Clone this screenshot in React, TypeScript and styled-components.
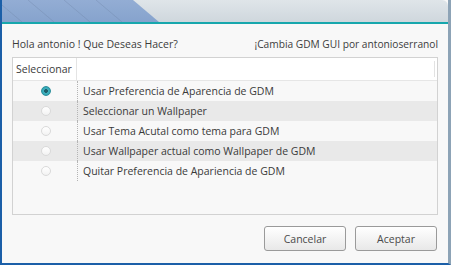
import React from "react";
import styled, { createGlobalStyle } from "styled-components";

const GlobalStyle = createGlobalStyle`
  html, body {
    margin: 0;
    padding: 0;
    background: #1b5fa8;
  }
  body {
    font-family: "Open Sans", "DejaVu Sans", sans-serif;
  }
`;

const options = [
  "Usar Preferencia de Aparencia de GDM",
  "Seleccionar un Wallpaper",
  "Usar Tema Acutal como tema para GDM",
  "Usar Wallpaper actual como Wallpaper de GDM",
  "Quitar Preferencia de Apariencia de GDM",
];

// blue slanted band at the left of the title bar
const TitleArt = () => (
  <StripeSvg width="160" height="22" viewBox="0 0 160 22">
    <defs>
      <linearGradient id="band" x1="0" y1="0" x2="0" y2="1">
        <stop offset="0" stopColor="#93add4" />
        <stop offset="1" stopColor="#86a3cd" />
      </linearGradient>
    </defs>
    <polygon points="0,0 131,0 157,22 0,22" fill="url(#band)" />
    <g stroke="#6f86a8" strokeOpacity="0.45" strokeWidth="0.8">
      <line x1="-6" y1="0" x2="20" y2="22" />
      <line x1="26" y1="0" x2="52" y2="22" />
      <line x1="62" y1="0" x2="88" y2="22" />
      <line x1="94" y1="0" x2="120" y2="22" />
    </g>
  </StripeSvg>
);

const App = () => {
  const selected = 0;
  return (
    <>
      <GlobalStyle />
      <Window>
        <TitleBar>
          <TitleArt />
        </TitleBar>
        <Body>
          <TopRow>
            <Greeting>Hola antonio ! Que Deseas Hacer?</Greeting>
            <Credit>¡Cambia GDM GUI por antonioserranol</Credit>
          </TopRow>
          <Table>
            <HeaderRow>
              <HeaderCell>Seleccionar</HeaderCell>
              <HeaderFill>
                <HeaderGrip />
              </HeaderFill>
            </HeaderRow>
            {options.map((label, i) => (
              <Row key={label} $alt={i % 2 === 1}>
                <RadioCell>
                  <Radio $checked={i === selected} />
                </RadioCell>
                <LabelCell>{label}</LabelCell>
              </Row>
            ))}
          </Table>
          <Footer>
            <Button>Cancelar</Button>
            <Button>Aceptar</Button>
          </Footer>
        </Body>
      </Window>
    </>
  );
};

export default App;

const Window = styled.div`
  width: 451px;
  height: 265px;
  box-sizing: border-box;
  display: flex;
  flex-direction: column;
  border-left: 2px solid #1b5fa8;
  border-bottom: 2px solid #1b5fa8;
  border-right: 3px solid #8da3b6;
  background: #f8f8f8;
  overflow: hidden;
`;

const TitleBar = styled.div`
  height: 22px;
  flex-shrink: 0;
  display: flex;
  border-bottom: 2px solid #17a7ad;
  border-top-right-radius: 6px;
  background: linear-gradient(to bottom, #dfe5e9, #cfd7dd);
  overflow: hidden;
`;

const StripeSvg = styled.svg`
  display: block;
  flex-shrink: 0;
`;

const Body = styled.div`
  flex: 1;
  display: flex;
  flex-direction: column;
  padding: 13px 10px 0 10px;
  background: #f8f8f8;
`;

const TopRow = styled.div`
  display: flex;
  justify-content: space-between;
  align-items: center;
  height: 14px;
  font-size: 10.5px;
  color: #3c3c3c;
`;

const Greeting = styled.span``;

const Credit = styled.span`
  font-size: 10.2px;
`;

const Table = styled.div`
  margin-top: 6px;
  height: 158px;
  box-sizing: border-box;
  border: 1px solid #d2d2d2;
  background: #f8f8f8;
  display: flex;
  flex-direction: column;
`;

const HeaderRow = styled.div`
  display: flex;
  height: 22px;
  background: #ffffff;
  border-bottom: 1px solid #e6e6e6;
  font-size: 10.5px;
  color: #3c3c3c;
`;

const HeaderCell = styled.div`
  width: 64px;
  display: flex;
  align-items: center;
  padding-left: 3px;
  box-sizing: border-box;
  border-right: 1px solid #e4e4e4;
`;

const HeaderFill = styled.div`
  flex: 1;
  display: flex;
  justify-content: flex-end;
  align-items: center;
  padding-right: 2px;
`;

const HeaderGrip = styled.div`
  width: 1px;
  height: 16px;
  background: #e2e2e2;
`;

const Row = styled.div<{ $alt: boolean }>`
  display: flex;
  height: 20px;
  background: ${(p) => (p.$alt ? "#e9e9e9" : "#f8f8f8")};
  font-size: 10.5px;
  color: #3a3a3a;
`;

const RadioCell = styled.div`
  width: 64px;
  display: flex;
  align-items: center;
  justify-content: center;
  border-right: 1px dotted #b4b4b4;
`;

const Radio = styled.span<{ $checked: boolean }>`
  width: 10px;
  height: 10px;
  border-radius: 50%;
  box-sizing: border-box;
  margin-left: 1px;
  border: 1px solid ${(p) => (p.$checked ? "#2a8f9c" : "#dadada")};
  background: ${(p) =>
    p.$checked
      ? "radial-gradient(circle, #1f5f6a 0 1.6px, #3fb2c0 2.2px, #2a9aaa 100%)"
      : "linear-gradient(to bottom, #ffffff, #f2f2f2)"};
`;

const LabelCell = styled.div`
  flex: 1;
  display: flex;
  align-items: center;
  padding-left: 5px;
`;

const Footer = styled.div`
  display: flex;
  justify-content: flex-end;
  gap: 9px;
  margin-top: 11px;
  padding-right: 1px;
`;

const Button = styled.button`
  width: 82px;
  height: 25px;
  box-sizing: border-box;
  border: 1px solid #9a9a9a;
  border-radius: 3px;
  background: linear-gradient(to bottom, #ffffff, #e8e8e8);
  font-family: "Open Sans", "DejaVu Sans", sans-serif;
  font-size: 10.5px;
  color: #4a4a4a;
  padding: 0;
`;
